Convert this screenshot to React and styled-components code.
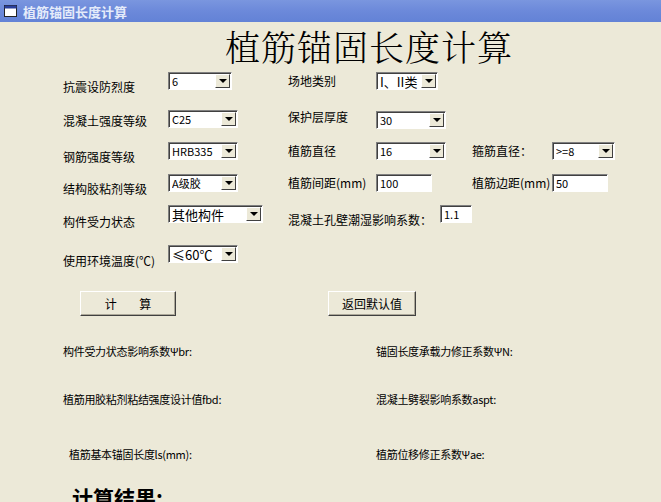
import React from 'react';
import styled, { createGlobalStyle } from 'styled-components';

const Global = createGlobalStyle`
  body { margin: 0; background: #ECE9D8; font-family: "Noto Sans CJK SC", "DejaVu Sans", sans-serif; font-size: 12px; color: #000; overflow: hidden; }
`;

const Window = styled.div`
  width: 661px;
  height: 502px;
  background: #ECE9D8;
  overflow: hidden;
`;

const TitleBar = styled.div`
  height: 22px;
  display: flex;
  align-items: center;
  gap: 6px;
  padding-left: 4px;
  background: linear-gradient(180deg, #7A96DF 0%, #6C89DA 50%, #6382D6 100%);
  color: #E4EBFA;
  font-weight: bold;
  font-size: 13px;
`;

const Heading = styled.div`
  margin: 2px 0 0 225px;
  height: 48px;
  font-family: "Noto Serif CJK SC", "Noto Sans CJK SC", serif;
  font-size: 35px;
  font-weight: 300;
  letter-spacing: 1px;
  line-height: 44px;
`;

const Form = styled.div`
  padding-left: 63px;
  display: flex;
  flex-direction: column;
`;

const Row = styled.div`
  display: flex;
  height: ${p => p.$h}px;
`;

const Cell = styled.div`
  width: ${p => p.$w}px;
  padding-top: ${p => p.$top || 0}px;
  flex-shrink: 0;
  white-space: nowrap;
`;

const ComboBox = styled.div`
  width: ${p => p.$w}px;
  height: 18px;
  box-sizing: border-box;
  background: #fff;
  border-top: 1px solid #808080;
  border-left: 1px solid #808080;
  border-bottom: 1px solid #fff;
  border-right: 1px solid #fff;
  box-shadow: inset 1px 1px 0 #404040;
  display: flex;
  align-items: center;
  font-size: 11px;
  padding-left: 3px;
`;

const ComboText = styled.span`
  flex: 1;
  overflow: hidden;
  font-size: ${p => p.$big ? 13 : 11}px;
`;

const Arrow = styled.div`
  width: 15px;
  height: 14px;
  margin-right: 1px;
  background: #ECE9D8;
  border: 1px solid;
  border-color: #fff #404040 #404040 #fff;
  box-sizing: border-box;
  display: flex;
  align-items: center;
  justify-content: center;
  &::after {
    content: '';
    border-left: 4px solid transparent;
    border-right: 4px solid transparent;
    border-top: 4px solid #000;
  }
`;

const TextBox = styled(ComboBox)`
  padding-left: 3px;
`;

const Buttons = styled.div`
  display: flex;
  margin-top: 20px;
  padding-left: 80px;
  gap: 152px;
`;

const Button = styled.div`
  width: ${p => p.$w}px;
  height: 25px;
  box-sizing: border-box;
  border: 1px solid;
  border-color: #fff #404040 #404040 #fff;
  box-shadow: inset -1px -1px 0 #ACA899;
  background: #ECE9D8;
  display: flex;
  align-items: center;
  justify-content: center;
  font-size: 12px;
  word-spacing: 20px;
`;

const Results = styled.div`
  display: grid;
  grid-template-columns: 313px 1fr;
  padding-left: 63px;
  margin-top: 27px;
`;

const ResultLabel = styled.div`
  height: ${p => p.$h}px;
  padding-left: ${p => p.$indent || 0}px;
  font-size: 11px;
  letter-spacing: -0.3px;
`;

const Big = styled.div`
  margin: 16px 0 0 72px;
  font-size: 21px;
  font-weight: bold;
`;

const Combo = ({ w, v, big }) => (
  <ComboBox $w={w}><ComboText $big={big}>{v}</ComboText><Arrow /></ComboBox>
);

export default function App() {
  return (
    <Window>
      <Global />
      <TitleBar>
        <svg width="13" height="12" viewBox="0 0 13 12">
          <rect x="0.5" y="0.5" width="12" height="11" fill="#fff" stroke="#222" />
          <rect x="0.5" y="0.5" width="12" height="3" fill="#2a3f9a" />
        </svg>
        植筋锚固长度计算
      </TitleBar>
      <Heading>植筋锚固长度计算</Heading>
      <Form>
        <Row $h={36}>
          <Cell $w={105} $top={6}>抗震设防烈度</Cell>
          <Cell $w={120} $top={0}><Combo w={64} v="6" /></Cell>
          <Cell $w={88} $top={-4}>场地类别</Cell>
          <Cell $w={96}><Combo w={62} v="I、II类" big /></Cell>
        </Row>
        <Row $h={34}>
          <Cell $w={105} $top={4}>混凝土强度等级</Cell>
          <Cell $w={120} $top={2}><Combo w={70} v="C25" /></Cell>
          <Cell $w={88} $top={-2}>保护层厚度</Cell>
          <Cell $w={96} $top={3}><Combo w={70} v="30" /></Cell>
        </Row>
        <Row $h={32}>
          <Cell $w={105} $top={6}>钢筋强度等级</Cell>
          <Cell $w={120} $top={0}><Combo w={70} v="HRB335" /></Cell>
          <Cell $w={88} $top={-4}>植筋直径</Cell>
          <Cell $w={96}><Combo w={70} v="16" /></Cell>
          <Cell $w={80} $top={-4}>箍筋直径：</Cell>
          <Cell $w={70}><Combo w={63} v=">=8" /></Cell>
        </Row>
        <Row $h={31}>
          <Cell $w={105} $top={6}>结构胶粘剂等级</Cell>
          <Cell $w={120}><Combo w={70} v="A级胶" /></Cell>
          <Cell $w={88} $top={-4}>植筋间距(mm)</Cell>
          <Cell $w={96}><TextBox $w={56}>100</TextBox></Cell>
          <Cell $w={80} $top={-4}>植筋边距(mm)</Cell>
          <Cell $w={70}><TextBox $w={56}>50</TextBox></Cell>
        </Row>
        <Row $h={40}>
          <Cell $w={105} $top={8}>构件受力状态</Cell>
          <Cell $w={120}><Combo w={95} v="其他构件" big /></Cell>
          <Cell $w={152} $top={6}>混凝土孔壁潮湿影响系数：</Cell>
          <Cell $w={40} $top={-2}><TextBox $w={32}>1.1</TextBox></Cell>
        </Row>
        <Row $h={26}>
          <Cell $w={105} $top={7}>使用环境温度(℃)</Cell>
          <Cell $w={120}><Combo w={70} v="≤60℃" big /></Cell>
        </Row>
      </Form>
      <Buttons>
        <Button $w={96}>计 算</Button>
        <Button $w={88}>返回默认值</Button>
      </Buttons>
      <Results>
        <ResultLabel $h={48}>构件受力状态影响系数Ψbr:</ResultLabel>
        <ResultLabel $h={48}>锚固长度承载力修正系数ΨN:</ResultLabel>
        <ResultLabel $h={55}>植筋用胶粘剂粘结强度设计值fbd:</ResultLabel>
        <ResultLabel $h={55}>混凝土劈裂影响系数aspt:</ResultLabel>
        <ResultLabel $h={20} $indent={6}>植筋基本锚固长度ls(mm):</ResultLabel>
        <ResultLabel $h={20}>植筋位移修正系数Ψae:</ResultLabel>
      </Results>
      <Big>计算结果:</Big>
    </Window>
  );
}
